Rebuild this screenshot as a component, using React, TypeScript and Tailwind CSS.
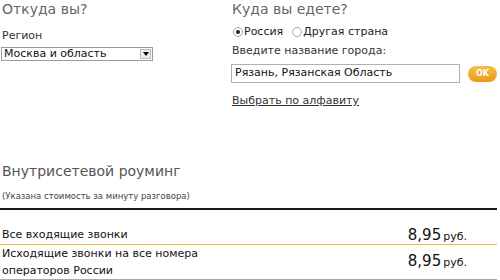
const font = "font-['DejaVu_Sans',Verdana,sans-serif]";

function Radio({ checked }: { checked?: boolean }) {
  return (
    <span className="flex h-[10px] w-[10px] shrink-0 items-center justify-center rounded-full border border-[#a8a8a8] bg-white">
      {checked && <span className="h-[4px] w-[4px] rounded-full bg-[#222]" />}
    </span>
  );
}

function Price() {
  return (
    <div className="flex items-baseline gap-[2px] pr-[30px] text-[#111]">
      <span className="text-[15px]">8,95</span>
      <span className="text-[11px]">руб.</span>
    </div>
  );
}

export default function App() {
  return (
    <div className={`h-[280px] w-[500px] overflow-hidden bg-white ${font}`}>
      <div className="flex">
        <div className="w-[231px] pl-[1px]">
          <h2 className="pl-[1px] pt-[1px] text-[14px] leading-[17px] text-[#666]">Откуда вы?</h2>
          <div className="mt-[11px] pl-[1px] text-[11px] leading-[13px] text-[#333]">Регион</div>
          <div className="mt-[5px] flex h-[14px] w-[152px] items-center justify-between border border-[#9c9c9c] bg-white pl-[2px] pr-[1px]">
            <span className="text-[11px] leading-[12px] text-[#111]">Москва и область</span>
            <span className="flex h-[10px] w-[11px] items-center justify-center border border-[#b8b8b8] bg-[#ececec]">
              <span className="h-0 w-0 border-x-[3px] border-t-[4px] border-x-transparent border-t-black" />
            </span>
          </div>
        </div>
        <div className="flex-1">
          <h2 className="pl-[1px] pt-[1px] text-[14px] leading-[17px] text-[#666]">Куда вы едете?</h2>
          <div className="mt-[8px] flex items-center pl-[2px] text-[11px] leading-[12px] text-[#222]">
            <Radio checked />
            <span className="ml-[1px] mr-[9px]">Россия</span>
            <Radio />
            <span className="ml-[1px]">Другая страна</span>
          </div>
          <div className="mt-[6px] pl-[1px] text-[11px] leading-[13px] text-[#333]">Введите название города:</div>
          <div className="mt-[7px] flex items-center">
            <div className="flex h-[19px] w-[229px] items-center border border-[#b0b0b0] pl-[3px] text-[11px] text-[#111]">
              Рязань, Рязанская Область
            </div>
            <button className="ml-[8px] flex h-[16px] w-[29px] items-center justify-center rounded-full bg-gradient-to-b from-[#f7c04a] to-[#e99a10] text-[8px] font-bold text-white">
              OK
            </button>
          </div>
          <a className="mt-[11px] block pl-[1px] text-[11px] leading-[13px] text-[#333] underline">Выбрать по алфавиту</a>
        </div>
      </div>

      <h3 className="mt-[56px] pl-[2px] text-[14px] leading-[17px] text-[#555]">Внутрисетевой роуминг</h3>
      <div className="mt-[11px] pl-[2px] text-[8.5px] leading-[11px] text-[#444]">(Указана стоимость за минуту разговора)</div>
      <div className="mt-[6px] h-[2px] w-[497px] bg-[#1a1a1a]" />

      <div className="mt-[16px] w-[497px] text-[11px] text-[#111]">
        <div className="flex h-[19px] items-center justify-between border-b border-[#efb83a] pl-[2px]">
          <span>Все входящие звонки</span>
          <Price />
        </div>
        <div className="flex items-center justify-between border-b-2 border-[#a9a9a9] pl-[2px] leading-[17px]">
          <span>
            Исходящие звонки на все номера
            <br />
            операторов России
          </span>
          <Price />
        </div>
      </div>
    </div>
  );
}
